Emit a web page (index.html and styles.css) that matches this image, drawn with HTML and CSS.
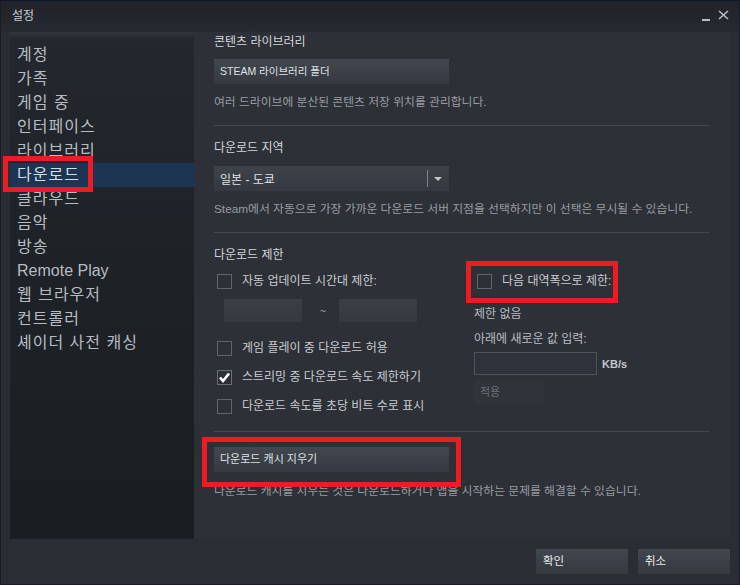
FILE: index.html
```html
<!DOCTYPE html>
<html lang="ko">
<head>
<meta charset="utf-8">
<title>설정</title>
<link rel="stylesheet" href="styles.css">
</head>
<body>
<div class="window">
  <div class="titlebar">
    <span class="title">설정</span>
    <div class="win-controls">
      <span class="ctl-min"></span>
      <svg class="ctl-close" width="11" height="10" viewBox="0 0 11 10"><path d="M1 1 L10 9 M10 1 L1 9" stroke="#b9bcc0" stroke-width="1.6" fill="none"/></svg>
    </div>
  </div>
  <div class="main">
    <nav class="sidebar">
      <div class="nav-item">계정</div>
      <div class="nav-item">가족</div>
      <div class="nav-item">게임 중</div>
      <div class="nav-item">인터페이스</div>
      <div class="nav-item">라이브러리</div>
      <div class="nav-item selected">다운로드</div>
      <div class="nav-item">클라우드</div>
      <div class="nav-item">음악</div>
      <div class="nav-item">방송</div>
      <div class="nav-item latin">Remote Play</div>
      <div class="nav-item">웹 브라우저</div>
      <div class="nav-item">컨트롤러</div>
      <div class="nav-item">셰이더 사전 캐싱</div>
    </nav>
    <section class="content">
      <div class="heading h-first">콘텐츠 라이브러리</div>
      <div class="btn wide">STEAM 라이브러리 폴더</div>
      <div class="desc">여러 드라이브에 분산된 콘텐츠 저장 위치를 관리합니다.</div>
      <div class="sep"></div>
      <div class="heading">다운로드 지역</div>
      <div class="dropdown">
        <span class="dd-value">일본 - 도쿄</span>
        <span class="dd-divider"></span>
        <span class="dd-arrow"></span>
      </div>
      <div class="desc">Steam에서 자동으로 가장 가까운 다운로드 서버 지점을 선택하지만 이 선택은 무시될 수 있습니다.</div>
      <div class="sep"></div>
      <div class="heading">다운로드 제한</div>
      <div class="limits">
        <div class="col-left">
          <div class="check-row"><span class="box"></span><span class="label">자동 업데이트 시간대 제한:</span></div>
          <div class="time-row">
            <span class="time-input"></span>
            <span class="tilde">~</span>
            <span class="time-input"></span>
          </div>
          <div class="check-row r-play"><span class="box"></span><span class="label">게임 플레이 중 다운로드 허용</span></div>
          <div class="check-row r-gap"><span class="box checked"><svg width="13" height="13" viewBox="0 0 13 13"><path d="M2 6.5 L5 10 L11 2.5" stroke="#ffffff" stroke-width="2.6" fill="none"/></svg></span><span class="label">스트리밍 중 다운로드 속도 제한하기</span></div>
          <div class="check-row r-gap"><span class="box"></span><span class="label">다운로드 속도를 초당 비트 수로 표시</span></div>
        </div>
        <div class="col-right">
          <div class="check-row"><span class="box"></span><span class="label">다음 대역폭으로 제한:</span></div>
          <div class="plain r-none">제한 없음</div>
          <div class="plain r-enter">아래에 새로운 값 입력:</div>
          <div class="kb-row"><span class="kb-input"></span><span class="kb-unit">KB/s</span></div>
          <div class="apply">적용</div>
        </div>
      </div>
      <div class="sep sep-last"></div>
      <div class="btn wide cache">다운로드 캐시 지우기</div>
      <div class="desc cache-desc">다운로드 캐시를 지우는 것은 다운로드하거나 앱을 시작하는 문제를 해결할 수 있습니다.</div>
    </section>
  </div>
  <div class="footer">
    <div class="btn foot-btn">확인</div>
    <div class="btn foot-btn">취소</div>
  </div>
  <div class="mark mark-nav"></div>
  <div class="mark mark-bw"></div>
  <div class="mark mark-cache"></div>
</div>
</body>
</html>
```

FILE: styles.css
```css
* { box-sizing: border-box; }
html, body { margin: 0; padding: 0; background: #2a2d33; }
body {
  font-family: "Liberation Sans", "Noto Sans CJK KR", sans-serif;
  color: #c4c7cb;
}
.window {
  position: relative;
  width: 740px;
  height: 585px;
  display: flex;
  flex-direction: column;
  background: #2a2d33;
  border-left: 1px solid #161d28;
  border-right: 1px solid #161d28;
  border-top: 1px solid #0f1826;
  border-bottom: 1px solid #161d28;
  overflow: hidden;
}
.titlebar {
  height: 31px;
  flex: none;
  display: flex;
  align-items: center;
  justify-content: space-between;
  padding-left: 11px;
  padding-right: 10px;
  background: linear-gradient(#202329, #262a30);
}
.title { font-size: 12px; line-height: 14px; color: #c9ccd0; margin-top: -2px; }
.win-controls { display: flex; align-items: flex-start; gap: 8px; height: 20px; }
.ctl-min { width: 8px; height: 2px; background: #b9bcc0; margin-top: 12px; }
.ctl-close { margin-top: 3px; }

.main {
  flex: 1;
  display: flex;
  padding-left: 9px;
  padding-right: 10px;
}
.sidebar {
  width: 184px;
  flex: none;
  padding-top: 11px;
  background: linear-gradient(#33363c 0px, #24272d 7px, #1f2227 40%, #1a1d21 100%);
}
.nav-item {
  height: 24px;
  line-height: 24px;
  font-size: 16px;
  letter-spacing: 1px;
  padding-left: 7px;
  color: #b7bcc2;
  white-space: nowrap;
}
.nav-item.latin { letter-spacing: 0; }
.nav-item.selected { background: #1c3553; color: #d8dde2; }

.content {
  flex: 1;
  background: #2d3037;
  padding: 2px 20px 0 20px;
  display: flex;
  flex-direction: column;
  align-items: flex-start;
  font-size: 12px;
}
.heading { font-size: 12px; line-height: 16px; color: #d3d6d9; margin-top: 14px; }
.h-first { margin-top: 0; }
.btn {
  height: 25px;
  line-height: 25px;
  padding-left: 6px;
  font-size: 10.5px;
  color: #dfe2e5;
  background: linear-gradient(#42464e, #353940);
}
.wide { width: 235px; margin-top: 9px; }
.desc { font-size: 11.8px; line-height: 16px; color: #979ca2; margin-top: 10px; white-space: nowrap; }
.sep { align-self: stretch; height: 1px; background: #44484f; margin-top: 15px; }
.dropdown {
  width: 235px;
  height: 25px;
  margin-top: 10px;
  display: flex;
  align-items: center;
  padding-left: 6px;
  background: linear-gradient(#3e4249, #343840);
}
.dd-value { flex: 1; font-size: 12px; color: #dfe2e5; }
.dd-divider { width: 1px; height: 17px; background: #7e8288; }
.dd-arrow {
  width: 0; height: 0;
  margin: 1px 7px 0 6px;
  border-left: 4px solid transparent;
  border-right: 4px solid transparent;
  border-top: 4px solid #c2c5c9;
}
.limits { display: flex; margin-top: 10px; align-self: stretch; }
.col-left { width: 260px; flex: none; }
.col-right { flex: none; }
.check-row { display: flex; align-items: center; height: 16px; }
.box {
  width: 15px; height: 15px;
  border: 1px solid #61656b;
  margin-left: 3px;
  flex: none;
  display: flex; align-items: center; justify-content: center;
}
.box.checked { border-color: #6a6e74; }
.label { margin-left: 10px; font-size: 12px; line-height: 16px; color: #c9ccd0; white-space: nowrap; }
.time-row { display: flex; align-items: center; margin-top: 10px; padding-left: 10px; }
.time-input { width: 78px; height: 23px; background: linear-gradient(#3a3e45, #353940); }
.tilde { width: 37px; padding-left: 5px; text-align: center; font-size: 11px; color: #9ea3a8; }
.r-play { margin-top: 18px; }
.r-gap { margin-top: 13px; }
.plain { font-size: 12px; line-height: 16px; color: #b9bdc2; }
.r-none { margin-top: 17px; }
.r-enter { margin-top: 9px; }
.kb-row { display: flex; align-items: center; margin-top: 5px; }
.kb-input { width: 123px; height: 23px; border: 1px solid #4e525a; background: #2f323a; }
.kb-unit { margin-left: 5px; font-size: 11px; font-weight: bold; color: #c3c7cc; }
.apply {
  width: 70px; height: 24px; line-height: 24px;
  margin-top: 5px;
  padding-left: 6px;
  font-size: 11px;
  color: #6b7077;
  background: #30333a;
}
.sep-last { margin-top: 17px; }
.cache { margin-top: 15px; font-size: 11px; }
.cache-desc { margin-top: 11px; }

.footer {
  height: 45px;
  flex: none;
  display: flex;
  justify-content: flex-end;
  align-items: flex-start;
  gap: 10px;
  padding-top: 10px;
  padding-right: 9px;
  background: #2a2d33;
}
.foot-btn { width: 92px; padding-left: 7px; font-size: 11.5px; color: #e8eaec; }

.mark { position: absolute; border: 5px solid #ec1b24; }
.mark-nav { left: 2px; top: 155px; width: 90px; height: 36px; }
.mark-bw { left: 465px; top: 260px; width: 152px; height: 42px; }
.mark-cache { left: 201px; top: 436px; width: 259px; height: 50px; }
```
